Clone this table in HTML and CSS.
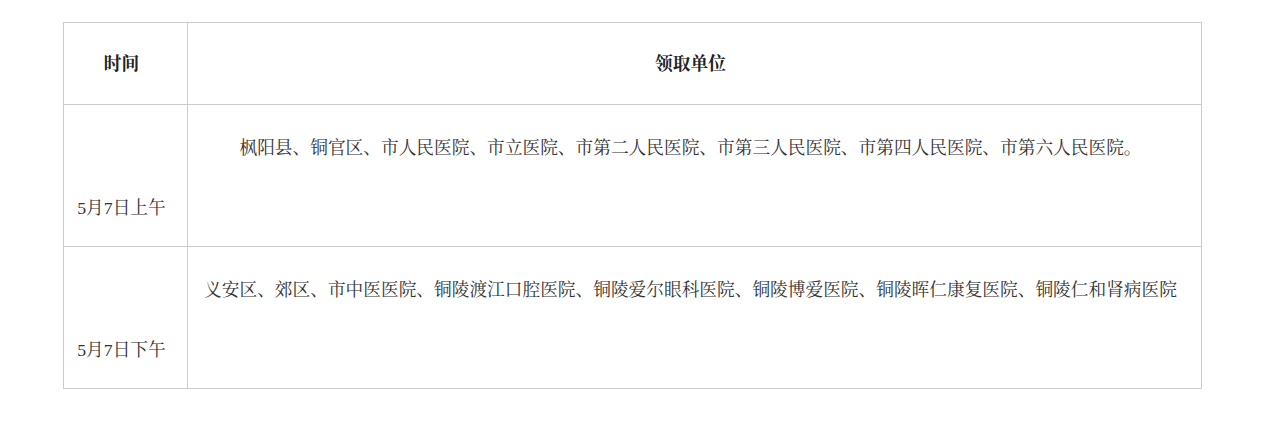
FILE: index.html
```html
<!DOCTYPE html>
<html lang="zh-CN">

<head>
  <meta charset="UTF-8">
  <title>领取单位安排</title>
  <link rel="stylesheet" href="styles.css">
</head>

<body>
  <table class="schedule">
    <thead>
      <tr class="head-row">
        <th class="col-time">时间</th>
        <th class="col-unit">领取单位</th>
      </tr>
    </thead>
    <tbody>
      <tr class="body-row">
        <td class="col-time">5月7日上午</td>
        <td class="col-unit">枫阳县、铜官区、市人民医院、市立医院、市第二人民医院、市第三人民医院、市第四人民医院、市第六人民医院。</td>
      </tr>
      <tr class="body-row">
        <td class="col-time">5月7日下午</td>
        <td class="col-unit">义安区、郊区、市中医医院、铜陵渡江口腔医院、铜陵爱尔眼科医院、铜陵博爱医院、铜陵晖仁康复医院、铜陵仁和肾病医院</td>
      </tr>
    </tbody>
  </table>
</body>

</html>
```

FILE: styles.css
```css
html,
body {
  background: #fff;
}

body {
  margin: 0;
  padding: 22px 0 0 63px;
  font-family: "Liberation Serif", "Noto Serif CJK SC", "Noto Sans CJK SC", serif;
  font-size: 17.7px;
  color: #333;
}

.schedule {
  width: 1139px;
  border-collapse: collapse;
  table-layout: fixed;
}

.schedule th,
.schedule td {
  border: 1px solid #ccc;
  padding: 0 8px 0 0;
  text-align: center;
  line-height: 24px;
}

.schedule th {
  font-weight: bold;
  color: #222;
}

.head-row {
  height: 82px;
}

.body-row {
  height: 142px;
}

.col-time {
  width: 115px;
}

.body-row .col-time {
  vertical-align: bottom;
  padding-bottom: 26px;
}

.body-row .col-unit {
  vertical-align: top;
  padding-top: 31px;
}
```
